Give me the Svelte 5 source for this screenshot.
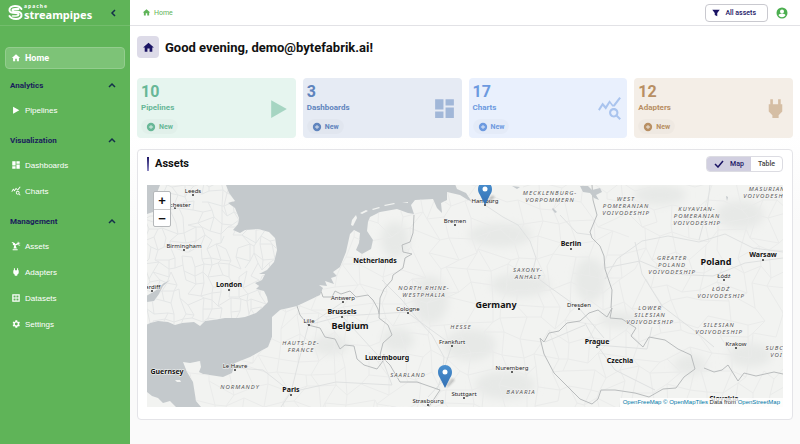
<script lang="ts">
	type Item = { label: string; icon: string };
	type Place = { name: string; x: number; y: number; dot?: [number, number] };

	const icons: Record<string, string> = {
		home: 'M12 3 2 12h3v8h5v-6h4v6h5v-8h3z',
		play: 'M5 4v17l15-8.500z',
		dashboard: 'M3 13h8V3H3zm0 8h8v-6H3zm10 0h8V11h-8zm0-18v6h8V3z',
		chart:
			'M19.9 18.5c.4-.7.7-1.5.7-2.4 0-2.5-2-4.5-4.5-4.5s-4.5 2-4.5 4.5 2 4.5 4.5 4.5c.9 0 1.7-.3 2.4-.7L21.6 23l1.4-1.4zM16.1 18.6c-1.4 0-2.5-1.1-2.5-2.5s1.1-2.5 2.5-2.5 2.5 1.1 2.5 2.5-1.1 2.5-2.5 2.5zM15.8 10l-1.1.2L12.3 7l-3.8 6.1-3-3.5L2.6 14.2 1 13l4.3-6.8 3 3.5L12 4l3.5 4.6L21.4 1 23 2.2 17 10.2z',
		assets: 'M4 20h12v2H4zm2-2 2-8a3 3 0 1 1 2-2l6-3V2h2v2h4v2h-3v3h3v2h-4V8l-7 3 3 7zM2 3h5v2H2z',
		plug: 'M7 3h2.5v5h5V3H17v5h1.5v7L15 18.5V21H9v-2.500L5.500 15V8H7z',
		dataset: 'M3 3h18v18H3zm3 3v5h5V6zm7 0v5h5V6zm-7 7v5h5v-5zm7 0v5h5v-5z',
		settings:
			'M19.4 13a7.500 7.500 0 0 0 0-2l2.100-1.600-2-3.500-2.500 1a7.300 7.300 0 0 0-1.700-1L15 3h-4.500l-.400 2.900a7.300 7.300 0 0 0-1.700 1l-2.500-1-2 3.500L6 11a7.500 7.500 0 0 0 0 2l-2.100 1.600 2 3.500 2.500-1c.500.400 1.100.700 1.700 1l.400 2.900H15l.300-2.900c.600-.300 1.200-.600 1.700-1l2.500 1 2-3.500zM12.700 15.500a3.500 3.500 0 1 1 0-7 3.500 3.500 0 0 1 0 7z',
		add: 'M12 2a10 10 0 1 0 0 20 10 10 0 0 0 0-20zm5 11h-4v4h-2v-4H7v-2h4V7h2v4h4z',
		filter: 'M3 4h18l-6 8v8l-6-3v-5z',
		account:
			'M12 1a11 11 0 1 0 0 22 11 11 0 0 0 0-22zm0 4a4 4 0 1 1 0 8 4 4 0 0 1 0-8zm0 15.500c-3 0-5.500-1.500-7-3.800.1-2.300 4.700-3.200 7-3.200s6.900.9 7 3.200a8.400 8.400 0 0 1-7 3.800z'
	};

	const sections: { title: string; items: Item[] }[] = [
		{ title: 'Analytics', items: [{ label: 'Pipelines', icon: 'play' }] },
		{
			title: 'Visualization',
			items: [
				{ label: 'Dashboards', icon: 'dashboard' },
				{ label: 'Charts', icon: 'chart' }
			]
		},
		{
			title: 'Management',
			items: [
				{ label: 'Assets', icon: 'assets' },
				{ label: 'Adapters', icon: 'plug' },
				{ label: 'Datasets', icon: 'dataset' },
				{ label: 'Settings', icon: 'settings' }
			]
		}
	];

	const stats = [
		{ count: 10, label: 'Pipelines', icon: 'play', tone: 'green' },
		{ count: 3, label: 'Dashboards', icon: 'dashboard', tone: 'navy' },
		{ count: 17, label: 'Charts', icon: 'chart', tone: 'blue' },
		{ count: 12, label: 'Adapters', icon: 'plug', tone: 'brown' }
	];

	const cities: Place[] = [
		{ name: 'Leeds', x: 193, y: 193, dot: [193, 195] },
		{ name: 'Manchester', x: 174, y: 207, dot: [175, 208] },
		{ name: 'Birmingham', x: 184, y: 248, dot: [184, 250] },
		{ name: 'Cardiff', x: 151, y: 289, dot: [152, 291] },
		{ name: 'Hamburg', x: 485, y: 203, dot: [485, 205] },
		{ name: 'Bremen', x: 455, y: 223, dot: [455, 225] },
		{ name: 'Antwerp', x: 343, y: 300, dot: [343, 302] },
		{ name: 'Lille', x: 309, y: 323, dot: [309, 325] },
		{ name: 'Le Havre', x: 235, y: 368, dot: [235, 370] },
		{ name: 'Cologne', x: 408, y: 311, dot: [408, 313] },
		{ name: 'Frankfurt', x: 452, y: 344, dot: [452, 346] },
		{ name: 'Nuremberg', x: 512, y: 370, dot: [512, 372] },
		{ name: 'Stuttgart', x: 464, y: 396, dot: [464, 398] },
		{ name: 'Strasbourg', x: 428, y: 403, dot: [428, 405] },
		{ name: 'Dresden', x: 579, y: 307, dot: [579, 309] },
		{ name: 'Łódź', x: 724, y: 278, dot: [724, 280] },
		{ name: 'Krakow', x: 736, y: 346, dot: [736, 348] }
	];

	const capitals: Place[] = [
		{ name: 'London', x: 229, y: 287, dot: [229, 290] },
		{ name: 'Netherlands', x: 375, y: 263 },
		{ name: 'Brussels', x: 342, y: 314, dot: [342, 317] },
		{ name: 'Luxembourg', x: 387, y: 360 },
		{ name: 'Guernsey', x: 167, y: 374 },
		{ name: 'Paris', x: 291, y: 392, dot: [291, 395] },
		{ name: 'Berlin', x: 571, y: 246, dot: [571, 249] },
		{ name: 'Warsaw', x: 763, y: 257, dot: [763, 260] },
		{ name: 'Prague', x: 597, y: 344, dot: [597, 347] },
		{ name: 'Czechia', x: 620, y: 363 },
		{ name: 'Slovakia', x: 724, y: 401 }
	];

	const countries: Place[] = [
		{ name: 'Belgium', x: 350, y: 329 },
		{ name: 'Germany', x: 496, y: 308 },
		{ name: 'Poland', x: 716, y: 265 }
	];

	const regions = [
		{ lines: ['MECKLENBURG-', 'VORPOMMERN'], x: 550, y: 195 },
		{ lines: ['WEST', 'POMERANIAN', 'VOIVODESHIP'], x: 626, y: 201 },
		{ lines: ['KUYAVIAN-', 'POMERANIAN', 'VOIVODESHIP'], x: 697, y: 211 },
		{ lines: ['MASURIAN', 'VOIVODESHIP'], x: 767, y: 191 },
		{ lines: ['GREATER', 'POLAND', 'VOIVODESHIP'], x: 672, y: 260 },
		{ lines: ['SAXONY-', 'ANHALT'], x: 528, y: 272 },
		{ lines: ['ŁÓDŹ', 'VOIVODESHIP'], x: 721, y: 291 },
		{ lines: ['LOWER', 'SILESIAN', 'VOIVODESHIP'], x: 650, y: 310 },
		{ lines: ['SILESIAN', 'VOIVODESHIP'], x: 719, y: 327 },
		{ lines: ['SUBCARPATHIAN', 'VOIVODESHIP'], x: 794, y: 350 },
		{ lines: ['NORTH RHINE-', 'WESTPHALIA'], x: 424, y: 290 },
		{ lines: ['HESSE'], x: 461, y: 329 },
		{ lines: ['SAARLAND'], x: 408, y: 377 },
		{ lines: ['BAVARIA'], x: 521, y: 394 },
		{ lines: ['HAUTS-DE-', 'FRANCE'], x: 301, y: 345 },
		{ lines: ['NORMANDY'], x: 240, y: 389 },
		{ lines: ['GRAND EST'], x: 388, y: 411 }
	];

	const pins = [
		{ x: 485, y: 205 },
		{ x: 445, y: 388 }
	];

	const britain =
		'M147 214l6-2 2-14 5-13h66l3 8 6 8-4 1-3 1 7 5 4 10-1 6-5 6 7 3 5-3 13-1 11 3 6 6 2 12-3 12-7 8-8 4 6 0-3 6-7 3 4 3-3 3 8 2 3 6 1 5-6 6-6 5-11 4-7 1h-13l-12 2-8 1-5 5-6-4-12 1-7 2-7-3-10-1-8 2-4 2v-23l8-1 5-7 4-8 7-6-6 3-9 8-9 5z';
	const continent =
		'M147 392L152 396 158 398 163 403 170 401 176 407H201L196 401 193 382 187 372 183 362 190 363 200 361 201 367 199 372 203 374 223 377 232 373 235 363 250 357 268 347 272 337V317L280 310 297 306 320 295 323 288 319 285 327 286 325 281 334 284 331 278 337 276 333 272 340 267 346 252 350 234 354 230 360 233 359 243 356 250 362 254 371 249 373 240 367 231 368 222 370 217 380 212 397 209 408 213 414 214 411 205 415 200 433 199 437 208 442 213 441 203 447 200 447 192 460 195 468 200 472 202 466 193 457 189 455 184H783V408H147z';

	const borders = [
		'M414 215l-1 18-3 9-8 3 1 7 9 2-7 4-2 10-10 7-1 5-8 9-4 9-1 20 9 7 4 10-9 8-3 12 10 10 10 17h17l23 8-6 9-6 9',
		'M297 306l3 9 8 10 12 3 5 9 10 2 5 10 5-4 9 1 3 13 7 6 13 4 6-8 1-7',
		'M320 288l3 9h9l3-6 6 3 9-3 6 6 12-2 5 5 5 9 1 5',
		'M592 185l1 15 4 15-7 17 2 6 8 8 4 10 1 13 7 21-1 18',
		'M612 308l-5 9-9-7-9 3-9 8-13 2-8 8-10 2-5 9-4-4 4 16 10 19 14 14 12 12 12 5 6-5 3-9h14l20 3 14 4 14-8 13-1 8-11 11-8-4-14-13-6-13-9-16-3-6 10-12-11 5-8-14-9-12-1z',
		'M704 368l10 4 8-2 6-5 5 8 5 8 6-8 12 3 18-4 9 2'
	];

	const rivers = [
		'M485 205l18 12 15 8 12 16 6 17-4 16 19 14 28 20 25 30',
		'M382 280l20 20 18 22 12 13 12 22-2 25-14 15',
		'M783 252l-30-4-28-14-26 8-31-6-26 5-25 18-12 20',
		'M635 242l7 32 20 32 34 26 18 15',
		'M710 185l-3 25-8 30M560 215l17 18 15 2',
		'M605 268l35-7 31 13 42 2 32-13 38-5',
		'M545 342l40-17M597 345l-12-22M597 345l18 25 40 20M597 345l50 4 5-22',
		'M291 392l-28-22-28-2M291 392l8-32 10-37M291 392l45-10 56 3M291 392l-10 15',
		'M343 302l-34 23M342 316l-34 9M342 316l41 45 9 24M408 312l-66 4M452 345l-44-32M452 345l-15 45'
	];

	const patches = [
		[470, 345, 26, 16],
		[520, 285, 30, 12],
		[500, 235, 32, 12],
		[430, 300, 18, 24],
		[398, 340, 16, 12],
		[505, 385, 30, 14],
		[590, 280, 16, 22],
		[660, 195, 26, 10],
		[740, 215, 24, 14],
		[690, 365, 16, 10],
		[620, 320, 20, 8],
		[750, 355, 22, 12],
		[395, 240, 14, 18],
		[330, 345, 18, 10]
	];

	// irregular road net: a grid whose crossings are pushed around by a seeded generator
	function roadNet(x0: number, y0: number, x1: number, y1: number, cell: number, seed: number) {
		let s = seed;
		const rand = () => (s = (s * 16807) % 2147483647) / 2147483647;
		const cols = Math.ceil((x1 - x0) / cell) + 1;
		const rows = Math.ceil((y1 - y0) / cell) + 1;
		const pts = Array.from({ length: rows }, (_, r) =>
			Array.from({ length: cols }, (_, c) => [
				Math.round(x0 + (c + rand() - 0.5) * cell),
				Math.round(y0 + (r + rand() - 0.5) * cell)
			])
		);
		let d = '';
		for (let r = 0; r < rows; r++) {
			for (let c = 0; c < cols; c++) {
				const [x, y] = pts[r][c];
				if (c + 1 < cols && rand() > 0.15) d += `M${x} ${y}L${pts[r][c + 1].join(' ')}`;
				if (r + 1 < rows && rand() > 0.15) d += `M${x} ${y}L${pts[r + 1][c].join(' ')}`;
			}
		}
		return d;
	}

	const britishRoads = roadNet(147, 185, 280, 330, 9, 7);
	const continentRoads = roadNet(180, 185, 783, 407, 17, 23);

	let open = $state(sections.map(() => true));
	let view = $state('map');
</script>

{#snippet icon(name: string)}
	<svg class="icon" viewBox="0 0 24 24" aria-hidden="true">
		<path d={icons[name]} fill="currentColor" fill-rule="evenodd" />
	</svg>
{/snippet}

<div class="app">
	<aside>
		<div class="brand">
			<svg class="mark" viewBox="0 0 30 30" aria-hidden="true">
				<g fill="none" stroke="#fff" stroke-linecap="round">
					<path stroke-width="4" d="M27 8C24 3 19 2 14 2 7 2 2 6 3 11s7 5 12 5c4 0 6 1 6 3" />
					<path stroke-width="4" d="M3 22c3 5 8 6 13 6 7 0 12-4 11-9-1-6-7-6-12-6-4 0-6-1-6-3 0-1 2-2 5-2h7" />
					<path stroke-width="3" d="M21 19c0 2-2 3-5 3H9" />
				</g>
			</svg>
			<div class="wordmark">
				<span class="apache">apache</span>
				<span class="name">streampipes</span>
			</div>
			<button type="button" class="collapse" aria-label="Collapse menu">
				<svg viewBox="0 0 8 8"><path d="M5 1 2 4l3 3" /></svg>
			</button>
		</div>
		<nav>
			<a class="item active" href="#home">{@render icon('home')}Home</a>
			{#each sections as section, i}
				<section>
					<button type="button" class="heading" aria-expanded={open[i]} onclick={() => (open[i] = !open[i])}>
						{section.title}
						<svg viewBox="0 0 8 8"><path d={open[i] ? 'M1 6l3-3 3 3' : 'M1 2l3 3 3-3'} /></svg>
					</button>
					{#if open[i]}
						<div class="items">
							{#each section.items as item}
								<a class="item" href="#{item.label.toLowerCase()}">{@render icon(item.icon)}{item.label}</a>
							{/each}
						</div>
					{/if}
				</section>
			{/each}
		</nav>
	</aside>

	<div class="page">
		<header>
			<a class="crumb" href="#home">{@render icon('home')}Home</a>
			<button type="button" class="filter">{@render icon('filter')}All assets</button>
			<button type="button" class="account" aria-label="Account">{@render icon('account')}</button>
		</header>

		<main>
			<div class="greeting">
				<span class="tile">{@render icon('home')}</span>
				<h1>Good evening, demo@bytefabrik.ai!</h1>
			</div>

			<div class="stats">
				{#each stats as stat}
					<div class="stat {stat.tone}">
						<div>
							<div class="count">{stat.count}</div>
							<div class="label">{stat.label}</div>
							<button type="button" class="new">{@render icon('add')}New</button>
						</div>
						<span class="glyph">{@render icon(stat.icon)}</span>
					</div>
				{/each}
			</div>

			<div class="panel">
				<div class="panel-head">
					<h2>Assets</h2>
					<div class="toggle">
						<button type="button" class:on={view === 'map'} onclick={() => (view = 'map')}>
							{#if view === 'map'}
								<svg class="check" viewBox="0 0 10 8"><path d="M1 4l3 3 5-6" /></svg>
							{/if}
							Map
						</button>
						<button type="button" class:on={view === 'table'} onclick={() => (view = 'table')}>Table</button>
					</div>
				</div>

				<div class="map">
					<svg class="canvas" viewBox="147 185 636 222" role="img" aria-label="Asset locations">
						<defs>
							<clipPath id="britain"><path d={britain} /></clipPath>
							<clipPath id="continent"><path d={continent} /></clipPath>
							<linearGradient id="pin" x2="0" y2="1">
								<stop offset="0" stop-color="#4a90cf" />
								<stop offset="1" stop-color="#3370b4" />
							</linearGradient>
							<filter id="soft"><feGaussianBlur stdDeviation="4" /></filter>
							<filter id="shade"><feGaussianBlur stdDeviation="1" /></filter>
						</defs>
						<path class="land" d={britain} />
						<path class="land" d={continent} />
						<path class="land" d="M351 225l1-5 4-5 1 3-4 8zM360 213l6-3 2 1-6 3zM372 209l7-2 1 1-7 2zM384 205l10-2 1 1-10 2zM402 203l6-1v1zM175 380l5 0 1 2-4 0z" />
						<g clip-path="url(#britain)">
							<path class="roads dense" d={britishRoads} />
						</g>
						<g clip-path="url(#continent)">
							<g filter="url(#soft)">
								{#each patches as [cx, cy, rx, ry]}
									<ellipse class="forest" {cx} {cy} {rx} {ry} />
								{/each}
							</g>
							<path class="roads" d={continentRoads} />
							{#each rivers as d}
								<path class="river" {d} />
							{/each}
							{#each borders as d}
								<path class="border" {d} />
							{/each}
							<path class="water" d="M580 186l8 0 4 4 8-2 2 4-6 3 3 5-5-2-4-5-7-1zM553 208l4 4-2 1-3-4zM512 186l8 1-3 2zM726 196l2 1-1 4z" />
						</g>

						{#each regions as region}
							<text class="region" x={region.x} y={region.y}>
								{#each region.lines as line, i}
									<tspan x={region.x} dy={i ? 7 : 0}>{line}</tspan>
								{/each}
							</text>
						{/each}
						{#each [...cities, ...capitals] as place}
							{#if place.dot}
								<circle class="dot" cx={place.dot[0]} cy={place.dot[1]} r="1" />
							{/if}
						{/each}
						{#each cities as { name, x, y }}
							<text class="city" {x} {y}>{name}</text>
						{/each}
						{#each capitals as { name, x, y }}
							<text class="capital" {x} {y}>{name}</text>
						{/each}
						{#each countries as { name, x, y }}
							<text class="country" {x} {y}>{name}</text>
						{/each}

						{#each pins as { x, y }}
							<g transform="translate({x - 7} {y - 23})">
								<path d="M7 22l7-9 3 2-6 6z" fill="#000" opacity="0.2" filter="url(#shade)" />
								<path d="M7 0C3 0 0 3 0 7c0 3 1 4 2 6l5 10 5-10c1-2 2-3 2-6 0-4-3-7-7-7z" fill="url(#pin)" />
								<circle cx="7" cy="7" r="2.500" fill="#fff" />
							</g>
						{/each}
					</svg>
					<div class="zoom">
						<button type="button" aria-label="Zoom in">+</button>
						<button type="button" aria-label="Zoom out">−</button>
					</div>
					<div class="credits">
						<a href="#openfreemap">OpenFreeMap</a> <a href="#openmaptiles">© OpenMapTiles</a> Data from
						<a href="#openstreetmap">OpenStreetMap</a>
					</div>
				</div>
			</div>
		</main>
	</div>
</div>

<style>
	:global(body) {
		margin: 0;
	}

	.app {
		display: flex;
		min-height: 100vh;
		font-family: Roboto, 'Liberation Sans', sans-serif;
		font-size: 8px;
		color: #111;
	}

	.app *,
	.app {
		box-sizing: border-box;
	}

	button {
		font: inherit;
		color: inherit;
		border: 0;
		padding: 0;
		background: none;
		cursor: pointer;
	}

	a {
		color: inherit;
		text-decoration: none;
	}

	svg {
		display: block;
		flex: none;
	}

	.icon {
		width: 10px;
		height: 10px;
	}

	aside {
		flex: none;
		width: 130px;
		background: #5fb458;
		color: #fff;
	}

	.brand {
		display: flex;
		align-items: center;
		height: 26px;
		padding: 0 12px 0 8px;
		border-bottom: 1px solid #73bd6c;
	}

	.mark {
		width: 15px;
		height: 15px;
	}

	.wordmark {
		flex: 1;
		display: flex;
		flex-direction: column;
		padding-left: 1px;
		font-family: 'Noto Sans', sans-serif;
		font-weight: 700;
	}

	.apache {
		font-size: 5px;
		line-height: 5px;
		letter-spacing: 1px;
	}

	.name {
		font-size: 11px;
		line-height: 12px;
	}

	.collapse svg,
	.heading svg {
		width: 8px;
		height: 8px;
		fill: none;
		stroke: #14304a;
		stroke-width: 1.500;
	}

	nav {
		padding: 21px 5px;
	}

	.item {
		display: flex;
		align-items: center;
		gap: 4px;
		height: 22px;
		padding: 0 5px;
		border-radius: 4px;
		font-family: 'Liberation Sans', sans-serif;
		border: 1px solid transparent;
		margin-bottom: 4px;
	}

	.item:last-child {
		margin-bottom: 0;
	}

	.item.active {
		margin-bottom: 5px;
		background: #7dc377;
		border-color: #93cd8e;
		font-family: Roboto, sans-serif;
		font-weight: 700;
		font-size: 9px;
	}

	section {
		margin-bottom: 8px;
	}

	.heading {
		display: flex;
		justify-content: space-between;
		align-items: center;
		width: 100%;
		height: 22px;
		padding: 0 9px 0 5px;
		font-weight: 700;
		color: #1a1c5c;
	}

	.items {
		margin-top: 3px;
	}

	.page {
		flex: 1;
		min-width: 0;
		background: linear-gradient(#fff 30%, #fafafa 50%);
	}

	header {
		display: flex;
		align-items: center;
		height: 26px;
		padding: 0 12px;
		border-bottom: 1px solid #e2e2e6;
		background: #fff;
	}

	.crumb {
		display: flex;
		align-items: center;
		gap: 3px;
		margin-right: auto;
		font-size: 7px;
		color: #5fb458;
	}

	.crumb .icon {
		width: 9px;
		height: 9px;
	}

	.filter {
		display: flex;
		align-items: center;
		gap: 4px;
		height: 18px;
		padding: 0 11px 0 5px;
		border: 1px solid #c9c9cf;
		border-radius: 4px;
		font-size: 7px;
		font-weight: 500;
		color: #1b1464;
	}

	.account {
		margin-left: 8px;
		color: #4caf50;
	}

	.account .icon {
		width: 12px;
		height: 12px;
	}

	main {
		padding: 10px 7px 24px;
	}

	.greeting {
		display: flex;
		align-items: center;
		gap: 6px;
	}

	.tile {
		display: grid;
		place-items: center;
		width: 22px;
		height: 22px;
		border-radius: 4px;
		background: #dddbe8;
		color: #1b1464;
	}

	.tile .icon {
		width: 13px;
		height: 13px;
	}

	h1,
	h2 {
		margin: 0;
		font-weight: 700;
	}

	h1 {
		font-size: 13px;
	}

	.stats {
		display: grid;
		grid-template-columns: repeat(4, 1fr);
		gap: 7px;
		margin-top: 20px;
	}

	.stat {
		display: flex;
		justify-content: space-between;
		align-items: center;
		padding: 4px 5px 4px 4px;
		border-radius: 4px;
		font-weight: 700;
	}

	.count {
		font-size: 16px;
		line-height: 19px;
	}

	.label {
		line-height: 13px;
	}

	.new {
		display: flex;
		align-items: center;
		gap: 3px;
		height: 15px;
		margin-top: 5px;
		padding: 0 5px;
		border-radius: 8px;
		font-size: 7px;
		background: rgb(0 0 0 / 2%);
	}

	.glyph {
		opacity: 0.5;
	}

	.glyph .icon {
		width: 25px;
		height: 25px;
	}

	.green {
		background: #e6f5ef;
		color: #68b797;
	}

	.navy {
		background: #e6ebf4;
		color: #5f84bd;
	}

	.blue {
		background: #e9f0fd;
		color: #6d9ae0;
	}

	.brown {
		background: #f4eee7;
		color: #b88f63;
	}

	.panel {
		margin-top: 11px;
		padding: 6px 9px 12px;
		border: 1px solid #e4e4e8;
		border-radius: 4px;
		background: #fff;
	}

	.panel-head {
		display: flex;
		justify-content: space-between;
		align-items: center;
		margin-bottom: 13px;
	}

	h2 {
		display: flex;
		align-items: center;
		gap: 6px;
		font-size: 11px;
		line-height: 14px;
	}

	h2::before {
		content: '';
		width: 2px;
		height: 14px;
		background: linear-gradient(#1b1464, #8f8bc4);
	}

	.toggle {
		display: flex;
		overflow: hidden;
		border: 1px solid #dcdce2;
		border-radius: 4px;
		font-size: 7px;
		font-weight: 500;
		color: #444;
	}

	.toggle button {
		display: flex;
		align-items: center;
		gap: 6px;
		height: 14px;
		padding: 0 7px;
	}

	.toggle .on {
		background: #d1cfe0;
		color: #1b1464;
	}

	.check {
		width: 10px;
		height: 8px;
		fill: none;
		stroke: #1b1464;
		stroke-width: 1.500;
	}

	.map {
		position: relative;
		background: #c4c9cc;
	}

	.canvas {
		width: 100%;
		height: auto;
		font-family: 'Noto Sans', sans-serif;
		text-anchor: middle;
	}

	.land {
		fill: #f2f3f1;
	}

	.water {
		fill: #c4c9cc;
	}

	.forest {
		fill: #e7e9e7;
	}

	.roads,
	.river,
	.border {
		fill: none;
		stroke: #eaebea;
		stroke-linejoin: round;
	}

	.dense {
		stroke: #e4e6e6;
	}

	.river {
		stroke: #dfe1e1;
	}

	.border {
		stroke: #b9bcbd;
	}

	.city,
	.capital,
	.country,
	.region {
		stroke: #f6f6f5;
		stroke-width: 1;
		paint-order: stroke;
	}

	.city {
		font-size: 6px;
		fill: #222;
	}

	.capital {
		font-size: 7px;
		font-weight: 700;
		fill: #111;
	}

	.country {
		font-size: 9px;
		font-weight: 700;
		fill: #111;
	}

	.region {
		font-size: 6px;
		font-style: italic;
		letter-spacing: 1px;
		fill: #555;
	}

	.dot {
		fill: #333;
	}

	.zoom {
		position: absolute;
		top: 6px;
		left: 6px;
		display: flex;
		flex-direction: column;
		border: 1px solid #b5b8ba;
		border-radius: 2px;
		background: #fff;
	}

	.zoom button {
		width: 16px;
		height: 17px;
		font: 700 13px/17px 'Liberation Sans', sans-serif;
		color: #111;
	}

	.zoom button + button {
		border-top: 1px solid #ccc;
	}

	.credits {
		position: absolute;
		right: 0;
		bottom: 0;
		padding: 0 3px;
		font: 6px/9px 'Liberation Sans', sans-serif;
		color: #333;
		background: rgb(255 255 255 / 80%);
	}

	.credits a {
		color: #0078a8;
	}
</style>
